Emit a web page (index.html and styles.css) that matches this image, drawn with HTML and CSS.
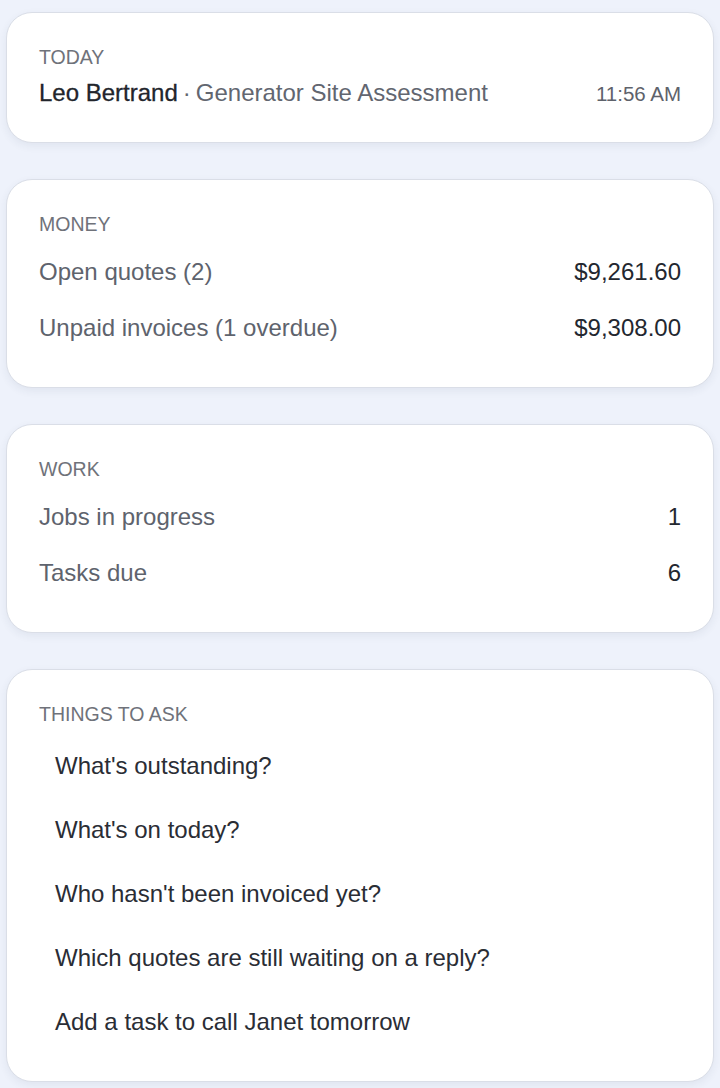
FILE: index.html
```html
<!DOCTYPE html>
<html lang="en">
<head>
<meta charset="utf-8">
<title>Overview</title>
<link rel="stylesheet" href="styles.css">
</head>
<body>
<main class="page">
  <section class="card">
    <h2 class="card-label">Today</h2>
    <div class="today-row">
      <div class="today-main"><span class="today-name">Leo Bertrand</span><span class="today-dot">·</span><span class="today-desc">Generator Site Assessment</span></div>
      <span class="today-time">11:56 AM</span>
    </div>
  </section>

  <section class="card">
    <h2 class="card-label">Money</h2>
    <div class="stat-row"><span class="stat-name">Open quotes (2)</span><span class="stat-value">$9,261.60</span></div>
    <div class="stat-row"><span class="stat-name">Unpaid invoices (1 overdue)</span><span class="stat-value">$9,308.00</span></div>
  </section>

  <section class="card">
    <h2 class="card-label">Work</h2>
    <div class="stat-row"><span class="stat-name">Jobs in progress</span><span class="stat-value">1</span></div>
    <div class="stat-row"><span class="stat-name">Tasks due</span><span class="stat-value">6</span></div>
  </section>

  <section class="card card-ask">
    <h2 class="card-label">Things to ask</h2>
    <ul class="ask-list">
      <li class="ask-item">What's outstanding?</li>
      <li class="ask-item">What's on today?</li>
      <li class="ask-item">Who hasn't been invoiced yet?</li>
      <li class="ask-item">Which quotes are still waiting on a reply?</li>
      <li class="ask-item">Add a task to call Janet tomorrow</li>
    </ul>
  </section>
</main>
</body>
</html>
```

FILE: styles.css
```css
html, body {
  margin: 0;
  padding: 0;
  background: #eef2fb;
}

body {
  font-family: "Liberation Sans", Arial, sans-serif;
  color: #24272e;
}

.page {
  display: flex;
  flex-direction: column;
  gap: 36px;
  padding: 12px 6px 8px;
}

.card {
  background: #ffffff;
  border: 1px solid #dadee7;
  border-radius: 26px;
  box-shadow: 0 3px 8px rgba(40, 50, 80, 0.07);
  padding: 32px 32px 32px;
}

.card-label {
  margin: 0 0 8px;
  font-size: 19.5px;
  line-height: 24px;
  font-weight: 400;
  text-transform: uppercase;
  color: #6f727a;
}

.today-row {
  display: flex;
  align-items: baseline;
  justify-content: space-between;
  line-height: 32px;
}

.today-main {
  font-size: 24px;
}

.today-name {
  color: #22252c;
  -webkit-text-stroke: 0.3px #22252c;
}

.today-dot {
  color: #626670;
  margin: 0 5px;
}

.today-desc {
  color: #626670;
}

.today-time {
  font-size: 20.5px;
  color: #5e626b;
}

.stat-row {
  display: flex;
  justify-content: space-between;
  align-items: baseline;
  padding: 12px 0;
  font-size: 24px;
  line-height: 32px;
}

.stat-row:last-child {
  padding-bottom: 11px;
}

.stat-name {
  color: #5e636d;
}

.stat-value {
  color: #23272f;
}

.card-ask {
  padding-bottom: 27px;
}

.ask-list {
  list-style: none;
  margin: 0;
  padding: 0;
}

.ask-item {
  padding: 16px 16px;
  font-size: 24px;
  line-height: 32px;
  color: #2a2d35;
}
```
